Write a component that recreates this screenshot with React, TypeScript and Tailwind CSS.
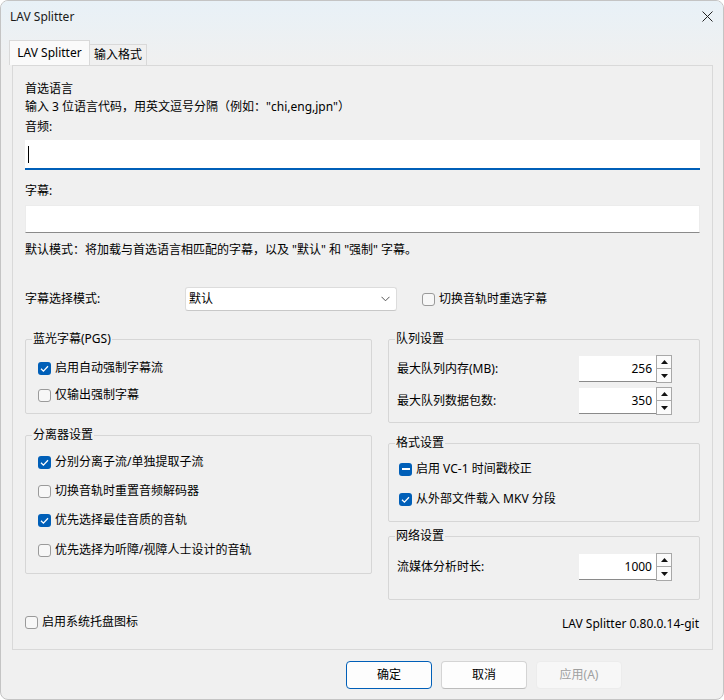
import React from "react";

type CheckState = "on" | "off" | "mixed";

function Box({ state }: { state: CheckState }) {
  if (state === "off") {
    return <span className="block w-[13px] h-[13px] shrink-0 rounded-[3px] border border-[#9a9a9a] bg-[#f7f7f7]" />;
  }
  return (
    <span className="flex w-[13px] h-[13px] shrink-0 items-center justify-center rounded-[3px] bg-[#005fb8]">
      {state === "on" ? (
        <svg width="13" height="13" viewBox="0 0 13 13">
          <path d="M3 6.8 L5.4 9.1 L10 4.2" fill="none" stroke="#fff" strokeWidth="1.3" />
        </svg>
      ) : (
        <span className="block w-[8px] h-[1.5px] bg-white" />
      )}
    </span>
  );
}

function Check({ label, state, className = "" }: { label: string; state: CheckState; className?: string }) {
  return (
    <div className={`flex h-[20px] items-center gap-[4px] ${className}`}>
      <Box state={state} />
      <span className="leading-[20px]">{label}</span>
    </div>
  );
}

function Spin({ value }: { value: string }) {
  return (
    <div className="flex items-center">
      <div className="h-[26px] w-[77px] bg-white border-b border-[#8a8a8a] pr-[4px] text-right leading-[26px]">
        {value}
      </div>
      <div className="flex h-[28px] w-[16px] flex-col">
        <div className="flex h-[14px] items-center justify-center border border-[#a8a8a8] bg-[#fbfbfb]">
          <svg width="7" height="4" viewBox="0 0 7 4">
            <polygon points="0,4 7,4 3.5,0" fill="#111" />
          </svg>
        </div>
        <div className="flex h-[14px] items-center justify-center border border-t-0 border-[#a8a8a8] bg-[#fbfbfb]">
          <svg width="7" height="4" viewBox="0 0 7 4">
            <polygon points="0,0 7,0 3.5,4" fill="#111" />
          </svg>
        </div>
      </div>
    </div>
  );
}

// group box: legend sits on the top border, body padding kept off the fieldset so the legend stays put
function Group({ title, className = "", body = "", children }: { title: string; className?: string; body?: string; children: React.ReactNode }) {
  return (
    <fieldset className={`border border-[#d6d6d6] rounded-[2px] ${className}`}>
      <legend className="ml-[6px] px-[1px] h-[18px] leading-[18px]">{title}</legend>
      <div className={body}>{children}</div>
    </fieldset>
  );
}

function SpinRow({ label, value, className = "" }: { label: string; value: string; className?: string }) {
  return (
    <div className={`flex h-[28px] items-center justify-between pl-[8px] pr-[27px] ${className}`}>
      <span>{label}</span>
      <Spin value={value} />
    </div>
  );
}

export default function App() {
  return (
    <div className="w-[724px] h-[700px] overflow-hidden rounded-[8px] border border-[#c4c4c4] bg-[#f0f0f0] text-[12px] text-black font-['Noto_Sans','Noto_Sans_CJK_SC',sans-serif]">
      {/* title bar */}
      <div className="bg-gradient-to-b from-[#e8f1f7] to-[#f0f0f0]">
        <div className="flex h-[31px] items-center justify-between pl-[9px] pr-[10px]">
          <span className="text-[#1a1a1a]">LAV Splitter</span>
          <svg width="11" height="11" viewBox="0 0 11 11">
            <path d="M0.5 0.5 L10.5 10.5 M10.5 0.5 L0.5 10.5" stroke="#222" strokeWidth="1" />
          </svg>
        </div>
        {/* tabs */}
        <div className="flex h-[33px] items-end pl-[8px]">
          <div className="flex h-[25px] w-[81px] items-center justify-center border border-b-0 border-[#d9d9d9] bg-[#fafafa]">
            LAV Splitter
          </div>
          <div className="flex h-[21px] w-[57px] items-center justify-center border border-l-0 border-b-0 border-[#d9d9d9] bg-[#f0f0f0]">
            输入格式
          </div>
        </div>
      </div>

      {/* panel */}
      <div className="ml-[11px] w-[701px] border border-[#d9d9d9] bg-[#f0f0f0] px-[12px] pt-[14px] pb-[17px]">
        <div className="h-[18px] leading-[18px]">首选语言</div>
        <div className="h-[18px] leading-[18px]">输入 3 位语言代码，用英文逗号分隔（例如："chi,eng,jpn"）</div>
        <div className="mt-[2px] h-[18px] leading-[18px]">音频:</div>
        <div className="mt-[4px] flex h-[30px] items-center border-b-2 border-[#005fb8] bg-white pl-[3px]">
          <span className="block h-[17px] w-[1px] bg-black" />
        </div>
        <div className="mt-[12px] h-[18px] leading-[18px]">字幕:</div>
        <div className="mt-[5px] h-[28px] border border-[#ececec] border-b-[#8a8a8a] bg-white" />
        <div className="mt-[8px] h-[18px] leading-[18px]">
          默认模式：将加载与首选语言相匹配的字幕，以及 "默认" 和 "强制" 字幕。
        </div>

        <div className="mt-[28px] flex h-[24px] items-center">
          <span className="w-[160px]">字幕选择模式:</span>
          <div className="flex h-[24px] w-[212px] items-center justify-between rounded-[3px] border border-[#dcdcdc] border-b-[#c8c8c8] bg-white pl-[3px] pr-[6px]">
            <span>默认</span>
            <svg width="9" height="6" viewBox="0 0 9 6">
              <path d="M0.5 0.8 L4.5 4.8 L8.5 0.8" fill="none" stroke="#555" strokeWidth="1" />
            </svg>
          </div>
          <Check className="ml-[25px]" state="off" label="切换音轨时重选字幕" />
        </div>

        <div className="mt-[19px] grid grid-cols-[347px_312px] gap-x-[16px] items-start">
          <div>
            <Group title="蓝光字幕(PGS)" body="pl-[12px] pb-[8px]">
              <Check className="mt-[10px]" state="on" label="启用自动强制字幕流" />
              <Check className="mt-[7px]" state="off" label="仅输出强制字幕" />
            </Group>
            <Group title="分离器设置" className="mt-[12px]" body="pl-[12px] pb-[13px]">
              <Check className="mt-[8px]" state="on" label="分别分离子流/单独提取子流" />
              <Check className="mt-[9px]" state="off" label="切换音轨时重置音频解码器" />
              <Check className="mt-[9px]" state="on" label="优先选择最佳音质的音轨" />
              <Check className="mt-[10px]" state="off" label="优先选择为听障/视障人士设计的音轨" />
            </Group>
          </div>
          <div>
            <Group title="队列设置" body="pb-[7px]">
              <SpinRow className="mt-[7px]" label="最大队列内存(MB):" value="256" />
              <SpinRow className="mt-[4px]" label="最大队列数据包数:" value="350" />
            </Group>
            <Group title="格式设置" className="mt-[11px]" body="pl-[10px] pb-[12px]">
              <Check className="mt-[7px]" state="mixed" label="启用 VC-1 时间戳校正" />
              <Check className="mt-[10px]" state="on" label="从外部文件载入 MKV 分段" />
            </Group>
            <Group title="网络设置" className="mt-[5px]" body="pb-[18px]">
              <SpinRow className="mt-[8px]" label="流媒体分析时长:" value="1000" />
            </Group>
          </div>
        </div>

        <div className="mt-[12px] flex h-[20px] items-center justify-between">
          <Check state="off" label="启用系统托盘图标" />
          <span className="pt-[3px] pr-[1px]">LAV Splitter 0.80.0.14-git</span>
        </div>
      </div>

      {/* buttons */}
      <div className="mt-[11px] flex justify-end gap-[9px] pr-[101px]">
        <button className="h-[28px] w-[86px] rounded-[4px] border border-[#005fb8] bg-[#fdfdfd]">确定</button>
        <button className="h-[28px] w-[86px] rounded-[4px] border border-[#d4d4d4] border-b-[#bcbcbc] bg-[#fdfdfd]">取消</button>
        <button className="h-[28px] w-[86px] rounded-[4px] border border-[#ececec] bg-[#f7f7f7] text-[#a0a0a0]">应用(A)</button>
      </div>
    </div>
  );
}
